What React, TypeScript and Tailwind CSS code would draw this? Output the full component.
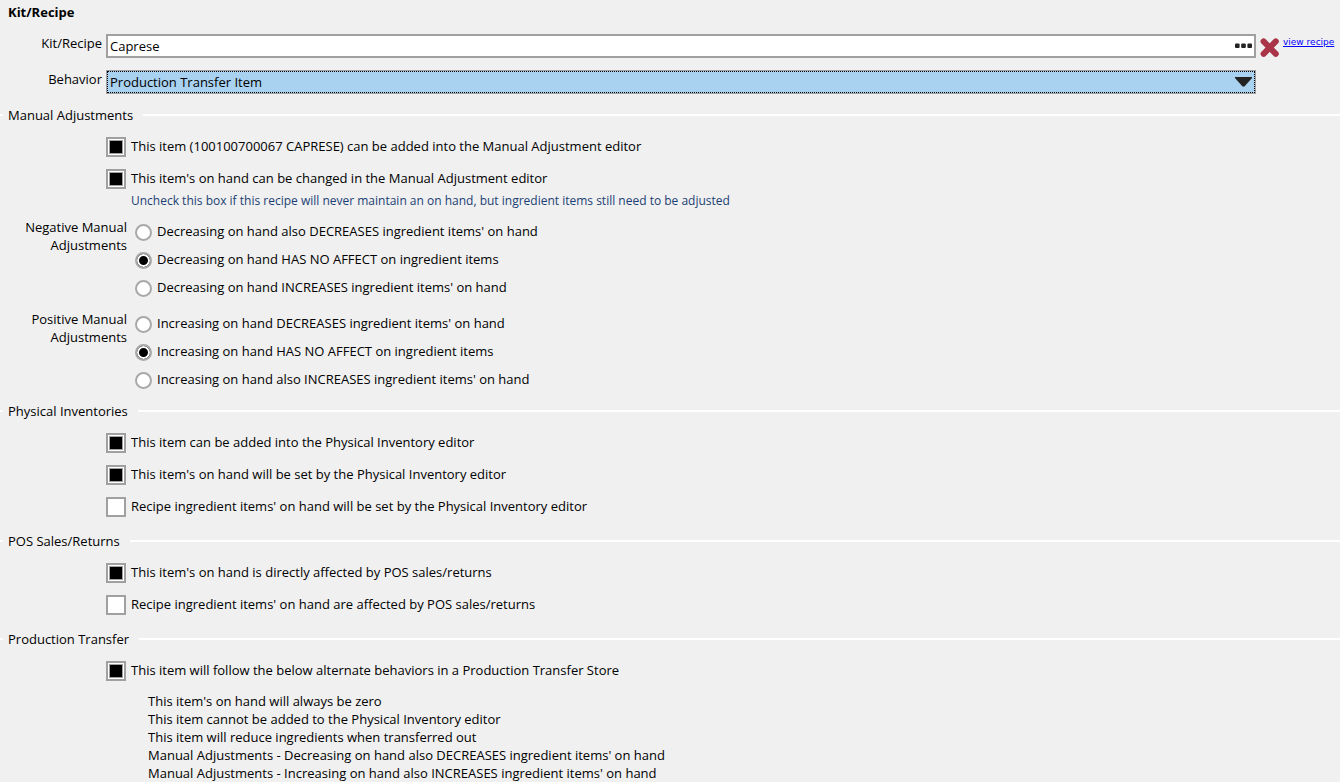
import type { ReactNode } from "react";

const negativeOptions = [
  "Decreasing on hand also DECREASES ingredient items' on hand",
  "Decreasing on hand HAS NO AFFECT on ingredient items",
  "Decreasing on hand INCREASES ingredient items' on hand",
];

const positiveOptions = [
  "Increasing on hand DECREASES ingredient items' on hand",
  "Increasing on hand HAS NO AFFECT on ingredient items",
  "Increasing on hand also INCREASES ingredient items' on hand",
];

const transferNotes = [
  "This item's on hand will always be zero",
  "This item cannot be added to the Physical Inventory editor",
  "This item will reduce ingredients when transferred out",
  "Manual Adjustments - Decreasing on hand also DECREASES ingredient items' on hand",
  "Manual Adjustments - Increasing on hand also INCREASES ingredient items' on hand",
];

function Section({ title, children }: { title: string; children: ReactNode }) {
  return (
    <section>
      <div className="flex items-center">
        <span className="h-[2px] w-[3px] bg-white" />
        <h2 className="ml-[5px] mr-[10px] leading-[18px]">{title}</h2>
        <span className="h-[2px] flex-1 bg-white" />
      </div>
      <div className="pt-[13px]">{children}</div>
    </section>
  );
}

function Check({ label, checked = false }: { label: string; checked?: boolean }) {
  return (
    <label className="flex w-fit items-center gap-[5px]">
      <span className="grid h-5 w-5 shrink-0">
        <input
          type="checkbox"
          defaultChecked={checked}
          className="peer col-start-1 row-start-1 h-5 w-5 appearance-none border-2 border-[#a0a0a0] bg-white"
        />
        <span className="pointer-events-none z-10 col-start-1 row-start-1 m-[3px] hidden border border-[#a0a0a0] bg-black peer-checked:block" />
      </span>
      <span className="pb-[2px] leading-[18px]">{label}</span>
    </label>
  );
}

function RadioGroup({ legend, name, options, selected }: { legend: string; name: string; options: string[]; selected: number }) {
  return (
    <div role="radiogroup" aria-label={legend} className="flex gap-2">
      <div className="w-[127px] pl-6 text-right leading-[18px]">{legend}</div>
      <div className="flex flex-col gap-2 pt-1">
        {options.map((option, i) => (
          <label key={option} className="flex h-5 items-center gap-[5px]">
            <input
              type="radio"
              name={name}
              defaultChecked={i === selected}
              className="h-[17px] w-[17px] shrink-0 appearance-none rounded-full border-2 border-[#a8a8a8] bg-white checked:bg-black checked:shadow-[inset_0_0_0_2px_#ffffff]"
            />
            <span className="pb-[2px] leading-[18px]">{option}</span>
          </label>
        ))}
      </div>
    </div>
  );
}

export default function App() {
  return (
    <main className="min-h-screen bg-[#f0f0f0] pt-[3px] font-['Open_Sans','Noto_Sans',sans-serif] text-[13px] text-black">
      <h1 className="pl-2 font-bold leading-[18px]">Kit/Recipe</h1>

      <div className="mt-[13px] flex items-start">
        <label htmlFor="recipe" className="w-[106px] shrink-0 pr-1 text-right leading-[18px]">Kit/Recipe</label>
        <div className="flex h-6 flex-1 items-center border-2 border-[#a0a0a0] bg-white">
          <input id="recipe" type="text" defaultValue="Caprese" className="h-5 min-w-0 flex-1 pl-[2px] outline-none" />
          <button type="button" aria-label="Browse recipes" className="mr-[2px]">
            <svg className="block h-4 w-[17px]" viewBox="0 0 17 16" fill="#222222">
              <rect x="0" y="5.5" width="4.6" height="4.6" rx="1" />
              <rect x="6.2" y="5.5" width="4.6" height="4.6" rx="1" />
              <rect x="12.4" y="5.5" width="4.6" height="4.6" rx="1" />
            </svg>
          </button>
        </div>
        <div className="flex w-[84px] shrink-0 pl-1">
          <button type="button" aria-label="Clear recipe" className="mt-1 h-5 w-5">
            <svg className="block h-5 w-5" viewBox="0 0 20 20" fill="none" stroke="#a93448" strokeWidth="6" strokeLinecap="round">
              <path d="M3.6 3.4 L15.8 15.8 M15.8 3.4 L3.6 15.8" />
            </svg>
          </button>
          <a href="#recipe" className="ml-[3px] whitespace-nowrap font-['DejaVu_Sans',sans-serif] text-[9px] leading-4 text-[#0000ff] underline">view recipe</a>
        </div>
      </div>

      <div className="mt-3 flex items-start">
        <label htmlFor="behavior" className="w-[106px] shrink-0 pr-1 text-right leading-[18px]">Behavior</label>
        <div className="mr-[84px] grid h-6 flex-1 border border-[#a0a0a0] bg-[#a9d1f0]">
          <select id="behavior" className="col-start-1 row-start-1 h-[22px] appearance-none border border-dotted border-black bg-transparent pl-[2px] pt-px outline-none">
            <option>Production Transfer Item</option>
          </select>
          <svg className="pointer-events-none col-start-1 row-start-1 mr-[3px] h-[10px] w-[17px] self-center justify-self-end" viewBox="0 0 17 10" fill="#222222">
            <path d="M0 0 H17 V1 L9.5 9.5 H7.5 L0 1 Z" />
          </svg>
        </div>
      </div>

      <div className="mt-3 flex flex-col gap-[15px]">
        <Section title="Manual Adjustments">
          <div className="flex flex-col gap-3 pl-[106px]">
            <Check checked label="This item (100100700067 CAPRESE) can be added into the Manual Adjustment editor" />
            <Check checked label="This item's on hand can be changed in the Manual Adjustment editor" />
          </div>
          <p className="pl-[131px] pt-[3px] text-[12px] leading-[18px] text-[#1b3f74]">
            Uncheck this box if this recipe will never maintain an on hand, but ingredient items still need to be adjusted
          </p>
          <div className="-mb-[3px] mt-2 flex flex-col gap-3">
            <RadioGroup legend="Negative Manual Adjustments" name="negative" options={negativeOptions} selected={1} />
            <RadioGroup legend="Positive Manual Adjustments" name="positive" options={positiveOptions} selected={1} />
          </div>
        </Section>

        <Section title="Physical Inventories">
          <div className="flex flex-col gap-3 pl-[106px]">
            <Check checked label="This item can be added into the Physical Inventory editor" />
            <Check checked label="This item's on hand will be set by the Physical Inventory editor" />
            <Check label="Recipe ingredient items' on hand will be set by the Physical Inventory editor" />
          </div>
        </Section>

        <Section title="POS Sales/Returns">
          <div className="flex flex-col gap-3 pl-[106px]">
            <Check checked label="This item's on hand is directly affected by POS sales/returns" />
            <Check label="Recipe ingredient items' on hand are affected by POS sales/returns" />
          </div>
        </Section>

        <Section title="Production Transfer">
          <div className="pl-[106px]">
            <Check checked label="This item will follow the below alternate behaviors in a Production Transfer Store" />
          </div>
          <ul className="pl-[148px] pt-[11px] leading-[18px]">
            {transferNotes.map((note) => (
              <li key={note}>{note}</li>
            ))}
          </ul>
        </Section>
      </div>
    </main>
  );
}
